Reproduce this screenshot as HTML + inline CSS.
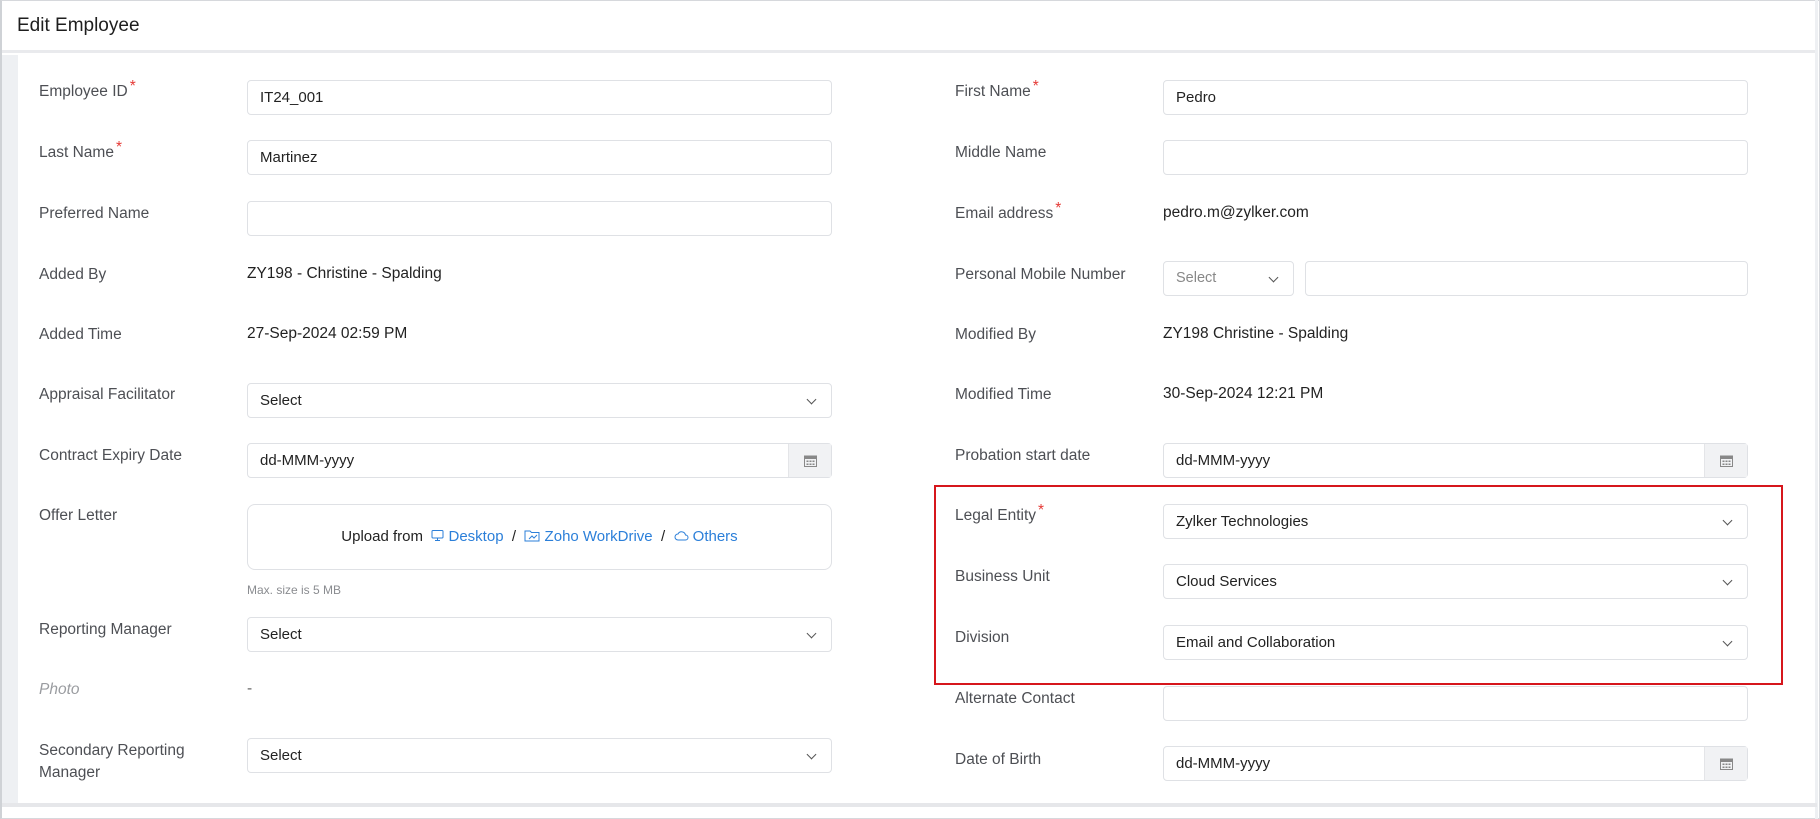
<!DOCTYPE html>
<html><head><meta charset="utf-8"><style>
*{box-sizing:border-box;margin:0;padding:0}
body{width:1820px;height:819px;background:#fff;font-family:"Liberation Sans",sans-serif;position:relative;overflow:hidden;color:#222}
.frame{position:absolute;left:0;top:0;width:1820px;height:819px;border:1px solid #d6d8dc;border-left:2px solid #cfd2d6}
.hdr{position:absolute;left:2px;top:1px;width:1815px;height:52px;background:#fff;border-bottom:3px solid #e9eaed}
.hdr span{position:absolute;left:15px;top:14px;font-size:19px;color:#1e1e1e}
.strip{position:absolute;left:2px;top:55px;width:16px;height:748px;background:#eef0f3}
.bot{position:absolute;left:2px;top:803px;width:1815px;height:4px;background:#e6e7ea}
.rstrip{position:absolute;left:1815px;top:0;width:3px;height:819px;background:#eef0f3}
.l{position:absolute;font-size:15.5px;color:#4d4f54;line-height:20px;margin-top:2px}
.l i{color:#e53935;font-style:normal;position:relative;top:-5px;left:2px}
.v{position:absolute;font-size:15.5px;color:#222;line-height:20px;margin-top:1px}
.in{position:absolute;height:35px;border:1px solid #dfe1e5;border-radius:4px;background:#fff;font-size:15px;line-height:33px;padding-left:12px;color:#222}
.sel::after{content:"";position:absolute;right:16px;top:12px;width:6px;height:6px;border-right:1.3px solid #555;border-bottom:1.3px solid #555;transform:rotate(45deg)}
.cal{position:absolute;right:0;top:0;width:43px;height:33px;background:#f1f2f4;border-left:1px solid #e4e5e8}
.cal svg{position:absolute;left:15px;top:10px}
.up{position:absolute;left:247px;top:504px;width:585px;height:66px;border:1px solid #dfe1e5;border-radius:8px;font-size:15px;text-align:center;line-height:64px;color:#222}
.up a{color:#2b7fd9;text-decoration:none}
.red{position:absolute;left:934px;top:485px;width:849px;height:200px;border:2px solid #d6161c}
</style></head><body>
<div class="frame"></div>
<div class="hdr"><span>Edit Employee</span></div>
<div class="strip"></div>
<div class="rstrip"></div>
<div class="bot"></div>

<div class="l" style="left:39px;top:80px">Employee ID<i>*</i></div>
<div class="in" style="left:247px;top:80px;width:585px">IT24_001</div>
<div class="l" style="left:39px;top:141px">Last Name<i>*</i></div>
<div class="in" style="left:247px;top:140px;width:585px">Martinez</div>
<div class="l" style="left:39px;top:202px">Preferred Name</div>
<div class="in" style="left:247px;top:201px;width:585px"></div>
<div class="l" style="left:39px;top:263px">Added By</div>
<div class="v" style="left:247px;top:263px">ZY198 - Christine - Spalding</div>
<div class="l" style="left:39px;top:323px">Added Time</div>
<div class="v" style="left:247px;top:323px">27-Sep-2024 02:59 PM</div>
<div class="l" style="left:39px;top:383px">Appraisal Facilitator</div>
<div class="in sel" style="left:247px;top:383px;width:585px">Select</div>
<div class="l" style="left:39px;top:444px">Contract Expiry Date</div>
<div class="in" style="left:247px;top:443px;width:585px">dd-MMM-yyyy<div class="cal"><svg width="13" height="13" viewBox="0 0 13 13"><rect x="0.5" y="2" width="12" height="10.5" fill="none" stroke="#888"/><rect x="0.5" y="2" width="12" height="3" fill="#888"/><g fill="#888"><rect x="2.5" y="6.5" width="2" height="1.5"/><rect x="5.5" y="6.5" width="2" height="1.5"/><rect x="8.5" y="6.5" width="2" height="1.5"/><rect x="2.5" y="9.5" width="2" height="1.5"/><rect x="5.5" y="9.5" width="2" height="1.5"/><rect x="8.5" y="9.5" width="2" height="1.5"/></g></svg></div></div>
<div class="l" style="left:39px;top:504px">Offer Letter</div>
<div class="up">Upload from &nbsp;<a><svg width="13" height="13" viewBox="0 0 13 13" style="vertical-align:-1px"><rect x="1" y="1.5" width="11" height="7.5" rx="1" fill="none" stroke="#2b7fd9"/><path d="M4 11.5h5M6.5 9v2.5" stroke="#2b7fd9"/></svg> Desktop</a> &nbsp;/&nbsp; <a><svg width="16" height="13" viewBox="0 0 16 13" style="vertical-align:-1px"><path d="M1 2h5l1.5 1.5H15V12H1z" fill="none" stroke="#2b7fd9"/><path d="M5 10l3-3 2 2 3-3" fill="none" stroke="#2b7fd9"/></svg> Zoho WorkDrive</a> &nbsp;/&nbsp; <a><svg width="15" height="11" viewBox="0 0 15 11" style="vertical-align:0"><path d="M4 10h7.5a2.5 2.5 0 0 0 0-5 4 4 0 0 0-7.5-1A3 3 0 0 0 4 10z" fill="none" stroke="#2b7fd9"/></svg> Others</a></div>
<div class="v" style="left:247px;top:579px;font-size:12px;color:#8a8c90">Max. size is 5 MB</div>
<div class="l" style="left:39px;top:618px">Reporting Manager</div>
<div class="in sel" style="left:247px;top:617px;width:585px">Select</div>
<div class="l" style="left:39px;top:678px;color:#9a9ca0;font-style:italic">Photo</div>
<div class="v" style="left:247px;top:678px;color:#666">-</div>
<div class="l" style="left:39px;top:739px">Secondary Reporting</div>
<div class="l" style="left:39px;top:761px">Manager</div>
<div class="in sel" style="left:247px;top:738px;width:585px">Select</div>

<div class="l" style="left:955px;top:80px">First Name<i>*</i></div>
<div class="in" style="left:1163px;top:80px;width:585px">Pedro</div>
<div class="l" style="left:955px;top:141px">Middle Name</div>
<div class="in" style="left:1163px;top:140px;width:585px"></div>
<div class="l" style="left:955px;top:202px">Email address<i>*</i></div>
<div class="v" style="left:1163px;top:202px">pedro.m@zylker.com</div>
<div class="l" style="left:955px;top:263px">Personal Mobile Number</div>
<div class="in sel" style="left:1163px;top:261px;width:131px;color:#888;font-size:14.5px">Select</div>
<div class="in" style="left:1305px;top:261px;width:443px"></div>
<div class="l" style="left:955px;top:323px">Modified By</div>
<div class="v" style="left:1163px;top:323px">ZY198 Christine - Spalding</div>
<div class="l" style="left:955px;top:383px">Modified Time</div>
<div class="v" style="left:1163px;top:383px">30-Sep-2024 12:21 PM</div>
<div class="l" style="left:955px;top:444px">Probation start date</div>
<div class="in" style="left:1163px;top:443px;width:585px">dd-MMM-yyyy<div class="cal"><svg width="13" height="13" viewBox="0 0 13 13"><rect x="0.5" y="2" width="12" height="10.5" fill="none" stroke="#888"/><rect x="0.5" y="2" width="12" height="3" fill="#888"/><g fill="#888"><rect x="2.5" y="6.5" width="2" height="1.5"/><rect x="5.5" y="6.5" width="2" height="1.5"/><rect x="8.5" y="6.5" width="2" height="1.5"/><rect x="2.5" y="9.5" width="2" height="1.5"/><rect x="5.5" y="9.5" width="2" height="1.5"/><rect x="8.5" y="9.5" width="2" height="1.5"/></g></svg></div></div>
<div class="l" style="left:955px;top:504px">Legal Entity<i>*</i></div>
<div class="in sel" style="left:1163px;top:504px;width:585px">Zylker Technologies</div>
<div class="l" style="left:955px;top:565px">Business Unit</div>
<div class="in sel" style="left:1163px;top:564px;width:585px">Cloud Services</div>
<div class="l" style="left:955px;top:626px">Division</div>
<div class="in sel" style="left:1163px;top:625px;width:585px">Email and Collaboration</div>
<div class="l" style="left:955px;top:687px">Alternate Contact</div>
<div class="in" style="left:1163px;top:686px;width:585px"></div>
<div class="l" style="left:955px;top:748px">Date of Birth</div>
<div class="in" style="left:1163px;top:746px;width:585px">dd-MMM-yyyy<div class="cal"><svg width="13" height="13" viewBox="0 0 13 13"><rect x="0.5" y="2" width="12" height="10.5" fill="none" stroke="#888"/><rect x="0.5" y="2" width="12" height="3" fill="#888"/><g fill="#888"><rect x="2.5" y="6.5" width="2" height="1.5"/><rect x="5.5" y="6.5" width="2" height="1.5"/><rect x="8.5" y="6.5" width="2" height="1.5"/><rect x="2.5" y="9.5" width="2" height="1.5"/><rect x="5.5" y="9.5" width="2" height="1.5"/><rect x="8.5" y="9.5" width="2" height="1.5"/></g></svg></div></div>
<div class="red"></div>
</body></html>
